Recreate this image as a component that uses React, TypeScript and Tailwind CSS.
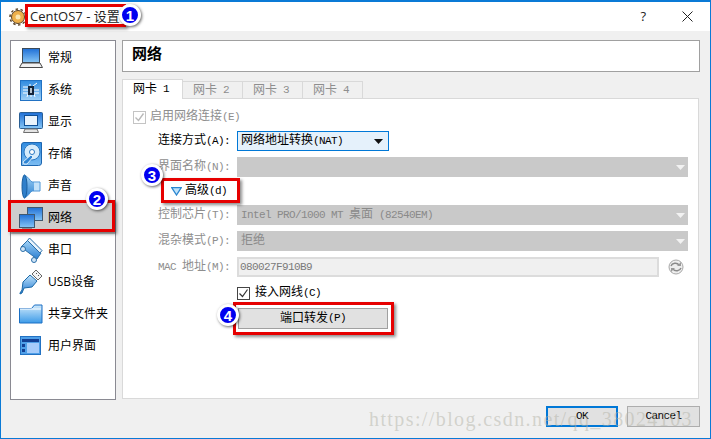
import React from 'react';

const BASE = "font-['Liberation_Mono','Noto_Sans_CJK_SC',monospace]";

// SimSun style text: half width latin next to 12px CJK
const T = ({ children }: { children: string }) => (
  <>
    {children.split(/([\x20-\x7e]+)/).map((part, i) =>
      /^[\x20-\x7e]+$/.test(part) ? <span key={i} className="whitespace-pre text-[11px] tracking-[-0.6px]">{part}</span> : part
    )}
  </>
);

const Badge = ({ n, className }: { n: number; className: string }) => (
  <div className={`absolute flex h-[22px] w-[22px] items-center justify-center rounded-full border-[3px] border-white bg-[#0000f0] text-[15px] font-bold leading-none text-white shadow-[1px_1px_3px_rgba(0,0,0,0.6)] font-['Liberation_Sans',sans-serif] ${className}`}>
    {n}
  </div>
);

const RedBox = ({ className }: { className: string }) => (
  <div className={`pointer-events-none absolute border-[3px] border-[#e60000] shadow-[2px_2px_3px_rgba(0,0,0,0.45)] ${className}`} />
);

const Caret = ({ light }: { light?: boolean }) => (
  <svg width="9" height="5" viewBox="0 0 9 5" className="shrink-0">
    <path d="M0 0h9L4.5 5z" fill={light ? '#f2f2f2' : '#111'} />
  </svg>
);

const Blue = ({ id, from = '#1f6fd6', to = '#86c6f6' }: { id: string; from?: string; to?: string }) => (
  <defs>
    <linearGradient id={id} x1="0" y1="0" x2="0" y2="1">
      <stop offset="0" stopColor={from} />
      <stop offset="1" stopColor={to} />
    </linearGradient>
  </defs>
);

const GeneralIcon = () => (
  <svg width="24" height="21" viewBox="0 0 24 21">
    <Blue id="gen" />
    <rect x="3.5" y=".5" width="17" height="14" fill="url(#gen)" stroke="#3c4a58" />
    <path d="M3 15h18l2.5 4.5h-23z" fill="#f1f1f1" stroke="#4a4a4a" />
  </svg>
);
const SystemIcon = () => (
  <svg width="22" height="21" viewBox="0 0 22 21">
    <Blue id="sys" from="#2f8be0" to="#9fd0f6" />
    <rect x=".5" y=".5" width="21" height="20" fill="url(#sys)" stroke="#2272c3" />
    <path d="M3 7h5M3 10h5M3 13h5M14 10h5M14 13h5M13 6l4-3M10 4v3M7 17l1-3M11 17v-3M15 17l-1-3" stroke="#fff" />
    <rect x="8" y="6" width="6" height="9" fill="#14253a" />
    <rect x="10" y="8" width="2" height="5" fill="#b9c6d0" />
  </svg>
);
const DisplayIcon = () => (
  <svg width="24" height="21" viewBox="0 0 24 21">
    <Blue id="dis" />
    <rect x=".5" y=".5" width="23" height="16" rx="1" fill="url(#dis)" stroke="#2b5f94" />
    <rect x="5.5" y="3.5" width="13" height="10" fill="#e9f3fc" stroke="#0f4f96" />
    <path d="M6 17h12l1.5 3.5h-15z" fill="#e4e4e4" stroke="#6e6e6e" />
  </svg>
);
const StorageIcon = () => (
  <svg width="21" height="24" viewBox="0 0 21 24">
    <Blue id="sto" from="#2f8be0" to="#7dbdf2" />
    <path d="M3 .5h17.5V21q0 2.5-3 2.5H.5V3Q.5.5 3 .5z" fill="url(#sto)" stroke="#1d66b0" />
    <circle cx="11" cy="10" r="8" fill="#d5ebfb" stroke="#2a78c2" />
    <circle cx="11" cy="10" r="2.5" fill="#fff" stroke="#2a78c2" />
    <path d="M2 20l8-7 2 2-6 7H3z" fill="#2f85d4" stroke="#fff" strokeWidth=".8" />
  </svg>
);
const SoundIcon = () => (
  <svg width="20" height="25" viewBox="0 0 20 25">
    <Blue id="sou" from="#9fd2f6" to="#2b7fd0" />
    <path d="M3 1c4 1 6 6 8 7h8v9h-8c-2 1-4 6-8 7z" fill="url(#sou)" stroke="#4a93d4" />
    <ellipse cx="3.5" cy="12.5" rx="2.5" ry="11.5" fill="#2f7fca" stroke="#1a5f9f" />
    <rect x="13" y="8.5" width="5.5" height="8" fill="#c4e2f9" />
  </svg>
);
const NetworkIcon = () => (
  <svg width="24" height="22" viewBox="0 0 24 22">
    <Blue id="net" />
    <rect x="8.5" y=".5" width="15" height="13" fill="url(#net)" stroke="#3f5870" />
    <rect x=".5" y="7.5" width="15" height="13" fill="url(#net)" stroke="#3f5870" />
    <path d="M3 21.5h10" stroke="#8a9096" />
  </svg>
);
const SerialIcon = () => (
  <svg width="23" height="26" viewBox="0 0 23 26">
    <Blue id="ser" from="#a6d6f8" to="#2a7fd2" />
    <path d="M8 3l13 13-4 6-16-12z" fill="url(#ser)" stroke="#2a6ea8" />
    <path d="M9.5 1l12.5 12.5-2 2.5L7.5 3.5z" fill="#e8f3fc" stroke="#2a6ea8" />
    <circle cx="3" cy="12" r="2.5" fill="#cfe5f8" stroke="#2a6ea8" />
    <circle cx="14" cy="23" r="2.5" fill="#cfe5f8" stroke="#2a6ea8" />
  </svg>
);
const UsbIcon = () => (
  <svg width="24" height="26" viewBox="0 0 24 26">
    <Blue id="usb" from="#bfe2fa" to="#1f78d2" />
    <path d="M1 25l2-1 2-5 8-1 5-6-7-6-7 7-1 8-2 3z" fill="url(#usb)" stroke="#1d6aa8" />
    <path d="M13 5l4-4 6 6-4 4z" fill="#f4f4f4" stroke="#666" />
    <path d="M17 4l1 1M20 7l-1-1" stroke="#555" />
  </svg>
);
const FolderIcon = () => (
  <svg width="24" height="20" viewBox="0 0 24 20">
    <Blue id="fol" from="#cfe9fb" to="#3d9be8" />
    <path d="M.5 4.5h12l3-3.5h7.5v18H.5z" fill="url(#fol)" stroke="#1a6fc4" />
    <path d="M1 5h21" stroke="#fff" />
  </svg>
);
const UiIcon = () => (
  <svg width="22" height="20" viewBox="0 0 22 20">
    <rect x=".5" y=".5" width="20" height="18" fill="#4f9fe8" stroke="#2272c3" />
    <rect x="2" y="3" width="17" height="3" fill="#123f94" />
    <rect x="2" y="8" width="3" height="3" fill="#123f94" />
    <rect x="2" y="13" width="3" height="3" fill="#123f94" />
    <rect x="7" y="7" width="12" height="10" fill="#a6ccfb" />
  </svg>
);

const navItems: { label: string; icon: React.ReactNode; selected?: boolean }[] = [
  { label: '常规', icon: <GeneralIcon /> },
  { label: '系统', icon: <SystemIcon /> },
  { label: '显示', icon: <DisplayIcon /> },
  { label: '存储', icon: <StorageIcon /> },
  { label: '声音', icon: <SoundIcon /> },
  { label: '网络', icon: <NetworkIcon />, selected: true },
  { label: '串口', icon: <SerialIcon /> },
  { label: 'USB设备', icon: <UsbIcon /> },
  { label: '共享文件夹', icon: <FolderIcon /> },
  { label: '用户界面', icon: <UiIcon /> },
];

const Row = ({ label, children, className, dark }: { label: string; children: React.ReactNode; className?: string; dark?: boolean }) => (
  <div className={`flex h-5 items-center ${className ?? ''}`}>
    <span className={`w-[114px] shrink-0 whitespace-nowrap pl-[35px] text-[12px] ${dark ? 'text-black' : 'text-[#8e8e8e]'}`}><T>{label}</T></span>
    {children}
  </div>
);

const DisabledSelect = ({ text }: { text?: string }) => (
  <div className="flex h-5 w-[451px] items-center justify-between bg-[#c9c9c9] pl-1 pr-[3px] text-[12px] text-[#8a8a8a]">
    <span className="whitespace-nowrap">{text && <T>{text}</T>}</span>
    <Caret light />
  </div>
);

export default function App() {
  return (
    <div className={`relative flex h-[439px] w-[711px] flex-col overflow-hidden border border-[#0a7ad6] border-t-[2px] bg-[#f0f0f0] ${BASE}`}>
      {/* title bar */}
      <div className="flex h-[29px] shrink-0 items-center bg-white pl-2 pr-[17px]">
        <svg width="18" height="18" viewBox="0 0 18 18">
          <circle cx="9" cy="9" r="8" fill="none" stroke="#5b4326" strokeWidth="1.5" strokeDasharray="2.5 2.5" />
          <circle cx="9" cy="9" r="6.5" fill="#eeb04a" stroke="#5b4326" />
          <circle cx="9" cy="9" r="2.5" fill="#fbe6b0" />
        </svg>
        <span className="ml-[3px] whitespace-nowrap font-['Open_Sans','Noto_Sans_CJK_SC',sans-serif] text-[13px] text-[#222]">CentOS7 - 设置</span>
        <span className="ml-auto font-['Open_Sans',sans-serif] text-[13px] text-[#222]">?</span>
        <svg width="11" height="11" viewBox="0 0 11 11" className="ml-[36px]">
          <path d="M.5.5l10 10M10.5.5l-10 10" stroke="#222" />
        </svg>
      </div>

      <div className="flex flex-1 gap-[6px] pl-[9px] pr-[10px] pt-[9px]">
        {/* sidebar */}
        <div className="flex h-[360px] w-[106px] shrink-0 flex-col border border-[#8a8a92] bg-white pt-px font-['Open_Sans','Noto_Sans_CJK_SC',sans-serif]">
          {navItems.map(item => (
            <div key={item.label} className={`flex h-[32px] items-center ${item.selected ? 'bg-[#cdcdcd]' : ''}`}>
              <div className="flex w-[37px] shrink-0 justify-center pl-[3px]">{item.icon}</div>
              <span className="whitespace-nowrap text-[12px] text-black">{item.label}</span>
            </div>
          ))}
        </div>

        {/* right side */}
        <div className="flex flex-1 flex-col">
          <div className="flex h-[32px] items-center border border-[#a0a0a0] bg-white pl-[9px] text-[15px] font-bold text-black">网络</div>

          <div className="mt-[7px] flex h-[20px] items-end text-[12px]">
            <div className="z-10 flex h-[20px] w-[61px] items-center border border-b-0 border-[#d9d9d9] bg-white pl-[10px] text-black"><T>网卡 1</T></div>
            {['网卡 2', '网卡 3', '网卡 4'].map(t => (
              <div key={t} className="flex h-[18px] w-[60px] items-center border border-b-0 border-l-0 border-[#d9d9d9] bg-[#f0f0f0] pl-[10px] text-[#8e8e8e]"><T>{t}</T></div>
            ))}
          </div>

          <div className="-mt-px flex h-[301px] w-[577px] flex-col border border-[#d9d9d9] bg-white">
            <div className="mt-[10px] flex h-4 items-center pl-[10px]">
              <div className="flex h-[13px] w-[13px] items-center justify-center border border-[#c4c4c4]">
                <svg width="11" height="11" viewBox="0 0 11 11"><path d="M1.5 5.5l3 3 5-7" fill="none" stroke="#b9b9b9" strokeWidth="1.4" /></svg>
              </div>
              <span className="ml-[4px] text-[12px] text-[#8e8e8e]"><T>启用网络连接(E)</T></span>
            </div>

            <Row label="连接方式(A):" className="mt-[6px]" dark>
              <div className="flex h-[20px] w-[152px] items-center justify-between border border-[#0078d7] bg-[#e5f1fb] pl-[3px] pr-[5px] text-[12px] text-black">
                <span className="whitespace-nowrap"><T>网络地址转换(NAT)</T></span>
                <Caret />
              </div>
            </Row>

            <Row label="界面名称(N):" className="mt-[6px]"><DisabledSelect /></Row>

            <div className="mt-[4px] flex h-5 items-center pl-[48px]">
              <svg width="11" height="9" viewBox="0 0 11 9"><path d="M.7.7h9.6L5.5 8z" fill="#bfe3fb" stroke="#2a86d0" strokeWidth="1.3" /></svg>
              <span className="ml-[3px] text-[12px] text-black"><T>高级(d)</T></span>
            </div>

            <Row label="控制芯片(T):" className="mt-[4px]"><DisabledSelect text="Intel PRO/1000 MT 桌面 (82540EM)" /></Row>
            <Row label="混杂模式(P):" className="mt-[6px]"><DisabledSelect text="拒绝" /></Row>

            <Row label="MAC 地址(M):" className="mt-[6px]">
              <div className="flex h-5 w-[422px] items-center border-2 border-[#dcdcdc] bg-[#f0f0f0] pl-px text-[#7a7a7a]"><T>080027F910B9</T></div>
              <svg width="16" height="16" viewBox="0 0 16 16" className="ml-[9px]">
                <circle cx="8" cy="8" r="7" fill="#eee" stroke="#a8a8a8" />
                <path d="M3 7c1-3 6-4 8-1M13 9c-1 3-6 4-8 1" fill="none" stroke="#8a8a8a" strokeWidth="1.4" />
                <path d="M13 3v4H9zM3 13V9h4z" fill="#9a9a9a" />
              </svg>
            </Row>

            <div className="mt-[8px] flex h-4 items-center pl-[114px]">
              <div className="flex h-[13px] w-[13px] items-center justify-center border border-[#444]">
                <svg width="11" height="11" viewBox="0 0 11 11"><path d="M1.5 5.5l3 3 5-7" fill="none" stroke="#333" strokeWidth="1.2" /></svg>
              </div>
              <span className="ml-[5px] text-[12px] text-black"><T>接入网线(C)</T></span>
            </div>

            <div className="ml-[115px] mt-[7px] flex h-[21px] w-[150px] items-center justify-center border border-[#a0a0a0] bg-[#e1e1e1] text-[12px] text-black"><T>端口转发(P)</T></div>
          </div>
        </div>
      </div>

      {/* bottom buttons */}
      <div className="flex h-[38px] shrink-0 items-start justify-end gap-[9px] pr-[10px] pt-[6px] text-[11px] tracking-[-0.6px]">
        <div className="flex h-[21px] w-[72px] items-center justify-center border-2 border-[#0078d7] bg-[#e1e1e1] text-black">OK</div>
        <div className="flex h-[21px] w-[73px] items-center justify-center border border-[#adadad] bg-[#e1e1e1] text-black">Cancel</div>
      </div>

      {/* annotations */}
      <RedBox className="left-[24px] top-[2px] h-[23px] w-[101px]" />
      <Badge n={1} className="left-[118px] top-[2px]" />
      <RedBox className="left-[7px] top-[198px] h-[32px] w-[107px]" />
      <Badge n={2} className="left-[85px] top-[186px]" />
      <RedBox className="left-[160px] top-[176px] h-[25px] w-[79px]" />
      <Badge n={3} className="left-[140px] top-[162px]" />
      <RedBox className="left-[232px] top-[300px] h-[33px] w-[161px]" />
      <Badge n={4} className="left-[216px] top-[302px]" />

      <span className="pointer-events-none absolute left-[368px] top-[402px] whitespace-nowrap font-['Liberation_Serif',serif] text-[20px] tracking-[1.4px] text-[#b4b4a8]/50">https://blog.csdn.net/qq_38024103</span>
    </div>
  );
}
